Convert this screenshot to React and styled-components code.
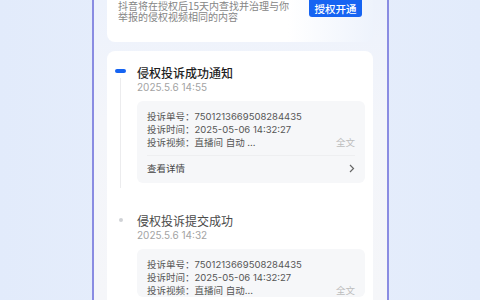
import React from 'react'
import styled, { createGlobalStyle } from 'styled-components'

const GlobalStyle = createGlobalStyle`
  html, body {
    margin: 0;
    padding: 0;
    background: #e4edfb;
    font-family: 'Noto Sans CJK SC', 'Noto Sans', sans-serif;
  }
`

const Page = styled.div`
  height: 300px;
  display: flex;
  justify-content: center;
  overflow: hidden;
  background: linear-gradient(90deg, #e2ebfb 0%, #e8effc 50%, #e2ebfb 100%);
`

const Phone = styled.div`
  width: 297px;
  height: 300px;
  box-sizing: border-box;
  margin-left: 1px;
  border-left: 2px solid #8a8ce2;
  border-right: 2px solid #8a8ce2;
  background: linear-gradient(180deg, #edf2fc 0%, #f3f5fa 40%, #f5f6f9 100%);
  padding: 0 14px 0 13px;
  display: flex;
  flex-direction: column;
  overflow: hidden;
`

const AuthCard = styled.div`
  height: 42px;
  box-sizing: border-box;
  border-radius: 0 0 8px 8px;
  background: linear-gradient(90deg, #ffffff 0%, #ffffff 68%, #eef3fc 100%);
  display: flex;
  justify-content: space-between;
  align-items: flex-start;
  padding: 0 11px;
`

const AuthText = styled.div`
  font-size: 10px;
  line-height: 11px;
  margin-top: -0.5px;
  color: #858585;
  width: 186px;
  white-space: nowrap;
`

const AuthButton = styled.button`
  margin-top: -6px;
  width: 53px;
  height: 23px;
  border: none;
  border-radius: 3px;
  background: #1664f2;
  color: #fff;
  font-family: inherit;
  font-size: 10.5px;
  font-weight: 500;
  padding: 5px 0 0;
`

const RecordCard = styled.div`
  margin-top: 9px;
  background: #fff;
  border-radius: 8px 8px 0 0;
  padding: 14px 10px 0 8px;
  flex: 1;
`

const Item = styled.div`
  display: grid;
  grid-template-columns: 11px 1fr;
  column-gap: 11px;
  padding-bottom: ${p => (p.$last ? 0 : '30px')};
`

const Rail = styled.div`
  display: flex;
  flex-direction: column;
  align-items: center;
`

const Dot = styled.div`
  width: ${p => (p.$active ? '11px' : '4px')};
  height: 4px;
  border-radius: 2px;
  margin-top: ${p => (p.$active ? '4px' : '5px')};
  background: ${p => (p.$active ? '#1664f2' : '#d0d2d6')};
`

const RailLine = styled.div`
  width: 1px;
  flex: 1;
  margin: 5px 0 -5px;
  background: #ececee;
`

const Title = styled.div`
  font-size: 12px;
  line-height: 15px;
  color: ${p => (p.$active ? '#1f1f1f' : '#4a4a4a')};
  font-weight: ${p => (p.$active ? 500 : 400)};
`

const Time = styled.div`
  font-family: 'Inter', 'Noto Sans', sans-serif;
  font-size: 10px;
  line-height: 12px;
  margin-top: 1px;
  color: #a3a3a3;
`

const InfoBox = styled.div`
  margin-top: 8px;
  margin-right: -2px;
  background: #f6f7f9;
  border-radius: 6px;
  padding: 9px 10px 0;
`

const InfoLine = styled.div`
  display: flex;
  font-size: 9.5px;
  line-height: 13px;
  color: #555;
`

const Value = styled.span`
  font-family: 'Inter', 'Noto Sans', 'Noto Sans CJK SC', sans-serif;
  flex: 1;
`

const FullText = styled.span`
  color: #bdbdbd;
`

const DetailRow = styled.div`
  display: flex;
  justify-content: space-between;
  align-items: center;
  margin-top: 6px;
  border-top: 1px solid #eeeff1;
  height: 24px;
  padding-bottom: 3px;
  font-size: 9.5px;
  color: #444;
`

const Chevron = () => (
  <svg width="6" height="9" viewBox="0 0 6 9">
    <path d="M1 1l3.5 3.5L1 8" fill="none" stroke="#666" strokeWidth="1.2" />
  </svg>
)

const records = [
  { title: '侵权投诉成功通知', time: '2025.5.6 14:55', video: '直播间 自动 ...', active: true, detail: true },
  { title: '侵权投诉提交成功', time: '2025.5.6 14:32', video: '直播间 自动...', active: false, detail: false },
]

export default function App() {
  return (
    <>
      <GlobalStyle />
      <Page>
        <Phone>
          <AuthCard>
            <AuthText>
              抖音将在授权后15天内查找并治理与你
              <br />
              举报的侵权视频相同的内容
            </AuthText>
            <AuthButton>授权开通</AuthButton>
          </AuthCard>
          <RecordCard>
            {records.map((r, i) => (
              <Item key={r.title} $last={i === records.length - 1}>
                <Rail>
                  <Dot $active={r.active} />
                  {i < records.length - 1 && <RailLine />}
                </Rail>
                <div>
                  <Title $active={r.active}>{r.title}</Title>
                  <Time>{r.time}</Time>
                  <InfoBox>
                    <InfoLine>投诉单号：<Value>7501213669508284435</Value></InfoLine>
                    <InfoLine>投诉时间：<Value>2025-05-06 14:32:27</Value></InfoLine>
                    <InfoLine>投诉视频：<Value>{r.video}</Value><FullText>全文</FullText></InfoLine>
                    {r.detail && (
                      <DetailRow>
                        <span>查看详情</span>
                        <Chevron />
                      </DetailRow>
                    )}
                  </InfoBox>
                </div>
              </Item>
            ))}
          </RecordCard>
        </Phone>
      </Page>
    </>
  )
}
